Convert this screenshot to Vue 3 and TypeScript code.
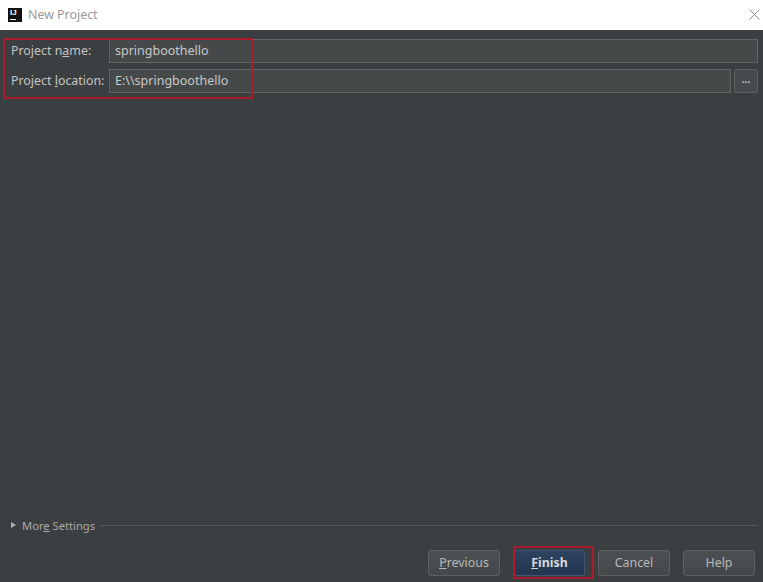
<script setup lang="ts">
const title: string = 'New Project'
</script>

<template>
  <div class="dialog">
    <header class="titlebar">
      <div class="logo"><span class="logo-t">IJ</span><span class="logo-u"></span></div>
      <span class="title">{{ title }}</span>
      <svg class="close" width="11" height="11" viewBox="0 0 11 11"><path d="M0.5 0.5 L10.5 10.5 M10.5 0.5 L0.5 10.5" stroke="#8a8a8a" stroke-width="1" fill="none"/></svg>
    </header>
    <main class="body">
      <section class="form">
        <div class="row">
          <label class="label">Project n<u>a</u>me:</label>
          <div class="input">springboothello</div>
        </div>
        <div class="row">
          <label class="label">Project <u>l</u>ocation:</label>
          <div class="input">E:\\springboothello</div>
          <button class="browse">...</button>
        </div>
        <div class="mark mark-form"></div>
      </section>
      <div class="spacer"></div>
      <div class="more">
        <span class="arrow"></span>
        <span class="more-text">Mor<u>e</u> Settings</span>
        <span class="rule"></span>
      </div>
      <footer class="buttons">
        <button class="btn"><u>P</u>revious</button>
        <div class="finish-wrap">
          <button class="btn primary"><u>F</u>inish</button>
          <div class="mark mark-finish"></div>
        </div>
        <button class="btn">Cancel</button>
        <button class="btn">Help</button>
      </footer>
    </main>
  </div>
</template>

<style>
html, body { margin: 0; background: #3c3f41; }
</style>

<style scoped>
.dialog { width: 763px; height: 582px; display: flex; flex-direction: column; font-family: "Noto Sans", "Open Sans", sans-serif; font-size: 12.4px; color: #bbbbbb; overflow: hidden; }
.titlebar { height: 30px; background: #fff; display: flex; align-items: center; padding: 0 3px 1px 8px; box-sizing: border-box; flex: none; }
.logo { width: 14px; height: 14px; background: #111; position: relative; margin-right: 6px; color: #fff; }
.logo-t { position: absolute; left: 2px; top: 1px; font-size: 8px; line-height: 8px; font-weight: 700; font-family: "Liberation Sans", sans-serif; }
.logo-u { position: absolute; left: 2px; bottom: 2px; width: 6px; height: 1px; background: #fff; }
.title { color: #999; }
.close { margin-left: auto; }
.body { flex: 1; background: #3c3f41; display: flex; flex-direction: column; padding: 9px 5px 6px 11px; box-sizing: border-box; min-height: 0; }
.form { position: relative; display: flex; flex-direction: column; gap: 6px; }
.row { display: flex; align-items: center; height: 24px; }
.label { width: 98px; flex: none; white-space: nowrap; color: #c4c4c4; padding-bottom: 2px; }
.input { flex: 1; height: 24px; box-sizing: border-box; border: 1px solid #646464; background: #45494a; padding: 0 5px; line-height: 21px; color: #c8c8c8; font-size: 12.5px; }
.browse { width: 24px; height: 24px; margin-left: 3px; box-sizing: border-box; border: 1px solid #5e6060; border-radius: 2px; background: #484b4d; color: #c8c8c8; font: inherit; font-size: 10px; font-weight: 700; line-height: 14px; padding: 0 0 4px; }
.mark { position: absolute; border: 2px solid #a81c2e; box-sizing: border-box; pointer-events: none; }
.mark-form { left: -8px; top: -1px; width: 250px; height: 61px; }
.spacer { flex: 1; }
.more { display: flex; align-items: center; height: 16px; margin-bottom: 17px; }
.arrow { width: 0; height: 0; border-left: 5px solid #b0b0b0; border-top: 3.5px solid transparent; border-bottom: 3.5px solid transparent; margin-right: 6px; }
.more-text { color: #a8a8a8; white-space: nowrap; font-size: 11.2px; }
.rule { flex: 1; height: 1px; background: #555759; margin-left: 5px; }
.buttons { display: flex; align-items: center; justify-content: flex-end; gap: 13px; height: 26px; padding-right: 3px; }
.btn { width: 72px; height: 26px; box-sizing: border-box; border: 1px solid #5e6060; border-radius: 3px; background: linear-gradient(#4c5052, #45484a); color: #b8b8b8; font: inherit; padding: 0 0 2px; }
.finish-wrap { position: relative; margin-left: 1px; }
.primary { display: block; width: 71px; background: linear-gradient(#2c4360, #24364f); border-color: #3b5676; color: #d8d8d8; font-weight: 700; }
.mark-finish { left: -1px; top: -4px; width: 81px; height: 33px; }
</style>
